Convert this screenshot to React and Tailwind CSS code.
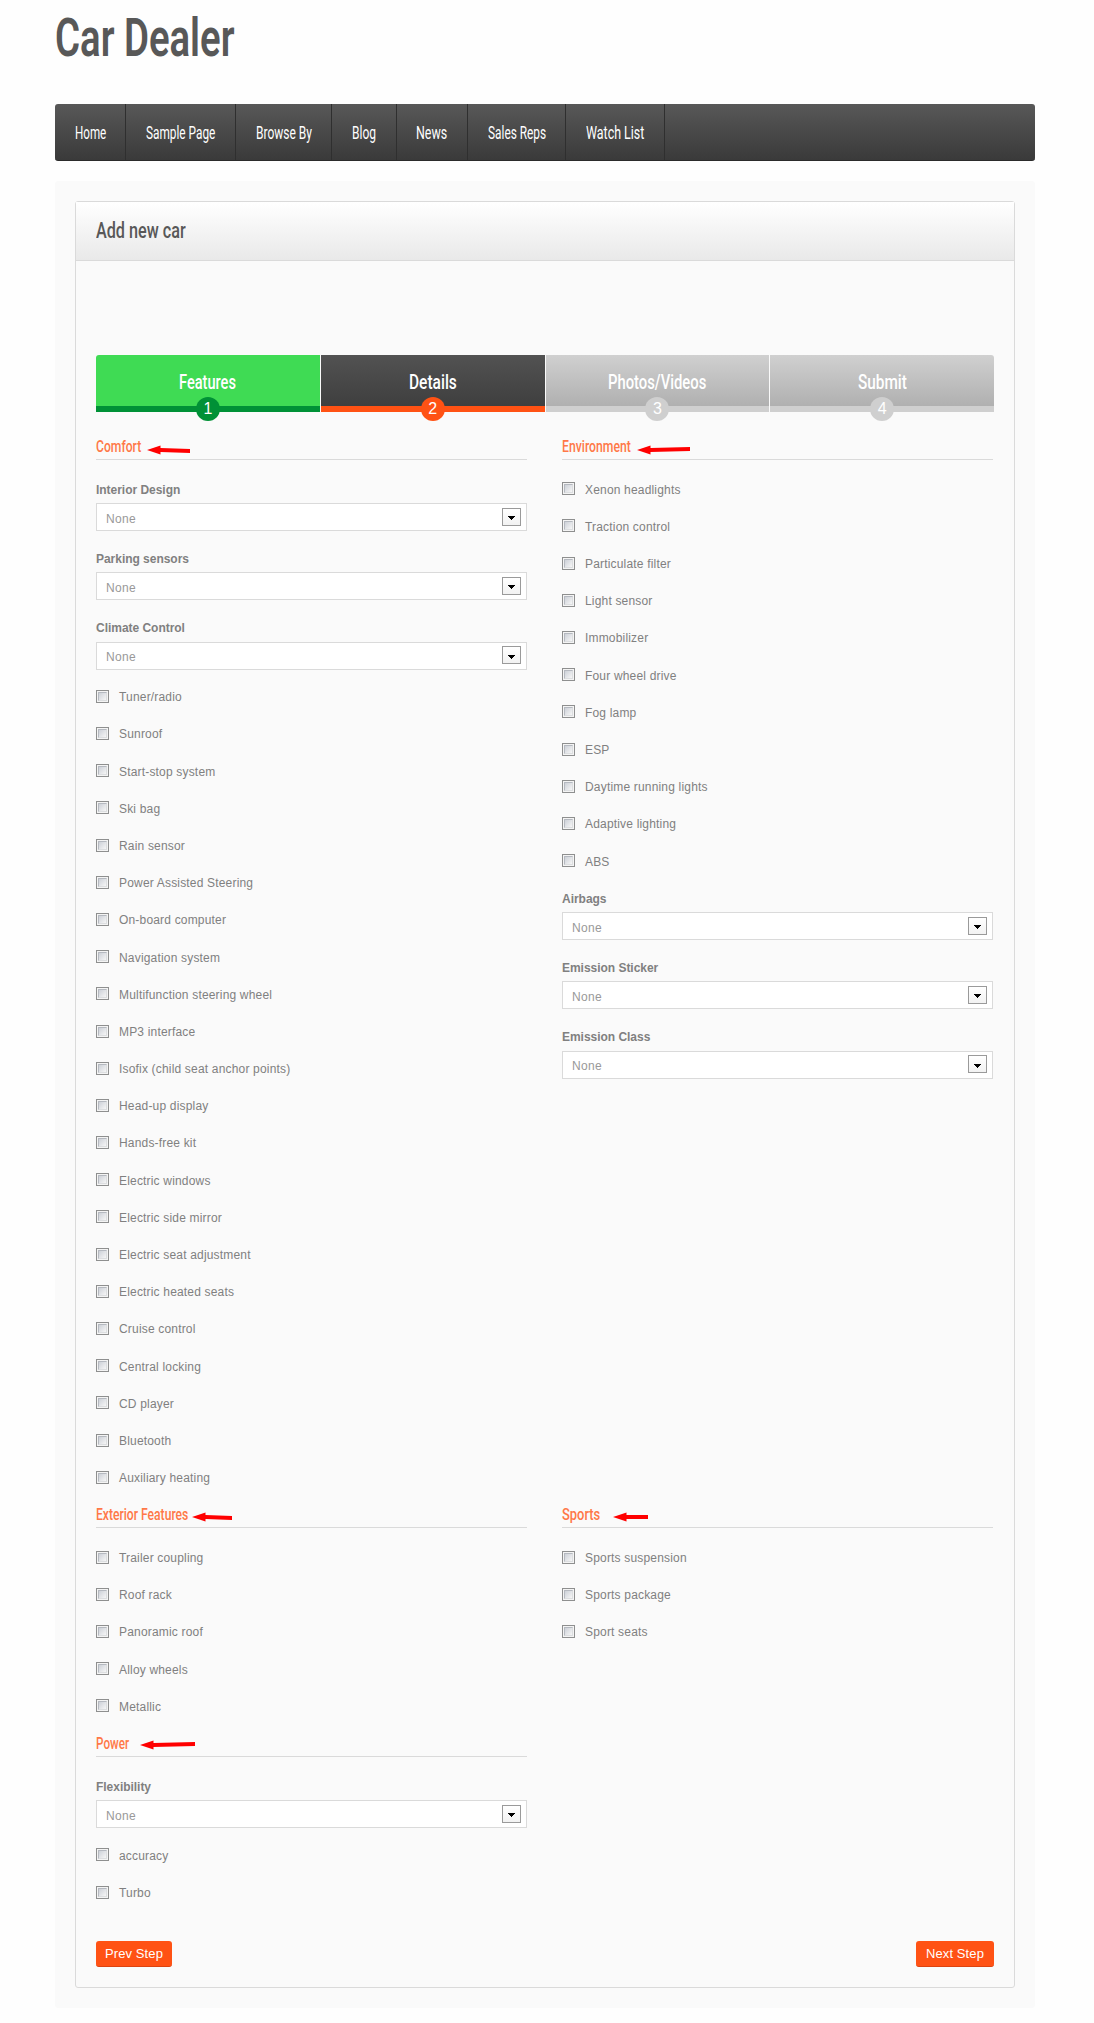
import { useLayoutEffect, useRef, useState } from "react";

// Condensed display text: squeezes its line of text to the given width.
function Condensed({ width, className = "", children }) {
  const ref = useRef(null);
  const [scale, setScale] = useState(1);
  useLayoutEffect(() => {
    setScale(width / ref.current.offsetWidth);
  }, [width]);
  return (
    <span className="block shrink-0 font-['Roboto',sans-serif]" style={{ width }}>
      <span
        ref={ref}
        className={`inline-block origin-left whitespace-nowrap ${className}`}
        style={{ transform: `scaleX(${scale})` }}
      >
        {children}
      </span>
    </span>
  );
}

const NAV = [
  ["Home", 31],
  ["Sample Page", 69],
  ["Browse By", 56],
  ["Blog", 24],
  ["News", 31],
  ["Sales Reps", 58],
  ["Watch List", 58],
];

const STEPS = [
  { label: "Features", width: 57, tile: "bg-[#3fdb54] border-[#009136] rounded-tl-[3px]", dot: "bg-[#009136]" },
  { label: "Details", width: 48, tile: "bg-linear-to-b from-[#525252] to-[#3f3f3f] border-[#ff5214]", dot: "bg-[#ff5214]" },
  { label: "Photos/Videos", width: 98, tile: "bg-linear-to-b from-[#d0d0d0] to-[#b0b0b0] border-[#cfcfcf]", dot: "bg-[#cfcfcf]" },
  { label: "Submit", width: 49, tile: "bg-linear-to-b from-[#d0d0d0] to-[#b0b0b0] border-[#cfcfcf] rounded-tr-[3px]", dot: "bg-[#cfcfcf]" },
];

const COMFORT = [
  "Tuner/radio", "Sunroof", "Start-stop system", "Ski bag", "Rain sensor",
  "Power Assisted Steering", "On-board computer", "Navigation system",
  "Multifunction steering wheel", "MP3 interface", "Isofix (child seat anchor points)",
  "Head-up display", "Hands-free kit", "Electric windows", "Electric side mirror",
  "Electric seat adjustment", "Electric heated seats", "Cruise control",
  "Central locking", "CD player", "Bluetooth", "Auxiliary heating",
];

const ENVIRONMENT = [
  "Xenon headlights", "Traction control", "Particulate filter", "Light sensor",
  "Immobilizer", "Four wheel drive", "Fog lamp", "ESP", "Daytime running lights",
  "Adaptive lighting", "ABS",
];

function Arrow({ length, tilt = 0 }) {
  return (
    <svg width={length} height="12" viewBox={`0 0 ${length} 12`} className="block shrink-0 fill-[#ff0000]">
      <path d={`M0 6 L13.5 1.5 V4 L${length} ${4 + tilt} V${8 + tilt} L13.5 8 V10.5 Z`} />
    </svg>
  );
}

function Section({ title, width, gap, arrow, tilt, children }) {
  return (
    <section>
      <div className="h-[42.7px]">
        <h3 className="flex h-8 items-center border-b border-[#dadada] pt-[6.6px]">
          <Condensed width={width} className="text-[17px] leading-6 font-medium text-[#ff7847]">{title}</Condensed>
          <div className={gap}>
            <Arrow length={arrow} tilt={tilt} />
          </div>
        </h3>
      </div>
      {children}
    </section>
  );
}

function Check({ label }) {
  return (
    <label className="flex h-[37.2px] items-center gap-[10px]">
      <span className="size-[13px] shrink-0 border border-[#8e8f8f] bg-[#f4f4f4] p-px">
        <span className="block size-[9px] border border-[#b5b9c0] border-r-[#dcdee0] border-b-[#dcdee0] bg-linear-to-br from-[#cdd1d8] to-[#f6f6f6]" />
      </span>
      <span className="pt-[1.8px] text-xs leading-4 tracking-[0.18px] text-[#808080]">{label}</span>
    </label>
  );
}

function Select({ label }) {
  return (
    <div className="h-[69.2px]">
      <div className="flex h-[33px] items-start pt-[11.6px] text-xs leading-4 font-bold tracking-[-0.03px] text-[#808080]">{label}</div>
      <div className="flex h-7 items-center justify-between border border-[#dadada] bg-white pr-[5px] pl-[9px]">
        <span className="pt-[3px] text-xs leading-4 tracking-[0.3px] text-[#999]">None</span>
        <span className="mb-px flex h-[18px] w-[19px] items-center justify-center border border-[#9a9a9a] bg-linear-to-b from-white to-[#f2f2f2]">
          <svg width="7" height="4" viewBox="0 0 7 4" className="mt-[3px] block" shapeRendering="crispEdges">
            <path d="M0 0H7V1H6V2H5V3H4V4H3V3H2V2H1V1H0Z" />
          </svg>
        </span>
      </div>
    </div>
  );
}

const BUTTON =
  "h-[26px] rounded-[3px] border-b border-[#dc4310] bg-[#ff5214] text-[13px] leading-[25px] tracking-[0.1px] text-white";

export default function App() {
  return (
    <div className="h-[2023px] w-[1094px] bg-[#fefefe] pl-[55px] font-['Liberation_Sans',Arial,sans-serif]">
      <div className="w-[980px]">
        <header className="h-[104px] pt-[5px]">
          <h1 className="-ml-[0.5px]">
            <Condensed width={179.5} className="text-[54px] leading-[65px] font-semibold text-[#585858]">Car Dealer</Condensed>
          </h1>
        </header>

        <nav className="flex h-[57px] overflow-hidden rounded-[3px] border-b border-[#2b2b2b] bg-linear-to-b from-[#585858] to-[#3a3a3a]">
          {NAV.map(([label, width]) => (
            <a key={label} className="flex items-center border-r border-[#2f2f2f] pt-[2px] pr-[19.5px] pl-[19.9px]">
              <Condensed width={width} className="text-[18px] leading-6 text-white">{label}</Condensed>
            </a>
          ))}
        </nav>

        <main className="mt-5 h-[1827px] rounded-[3px] bg-[#fafafa] p-5">
          <div className="h-[1787px] rounded-[3px] border border-[#dadada]">
            <h2 className="flex h-[59px] items-center border-b border-[#dadada] bg-linear-to-b from-white to-[#e9e9e9] pb-px pl-[19.5px]">
              <Condensed width={90} className="text-[22.5px] leading-7 font-medium text-[#585858]">Add new car</Condensed>
            </h2>

            <div className="px-5 pt-[94px]">
              <ol className="grid h-[57px] grid-cols-4 gap-px">
                {STEPS.map(({ label, width, tile, dot }, i) => (
                  <li key={label} className={`relative flex justify-center border-b-[6px] pt-[12.5px] ${tile}`}>
                    <Condensed width={width} className="text-[21px] leading-7 font-medium text-white">{label}</Condensed>
                    <span className={`absolute -bottom-[15px] left-1/2 flex size-6 -translate-x-1/2 items-center justify-center rounded-full text-base text-white ${dot}`}>
                      {i + 1}
                    </span>
                  </li>
                ))}
              </ol>

              <div className="grid grid-cols-[431px_431px] gap-x-[35px] pt-[15.5px]">
                <Section title="Comfort" width={45} gap="ml-[6px] pt-[7px]" arrow={43} tilt={1}>
                  <Select label="Interior Design" />
                  <Select label="Parking sensors" />
                  <Select label="Climate Control" />
                  {COMFORT.map((item) => <Check key={item} label={item} />)}
                </Section>
                <Section title="Environment" width={69} gap="ml-[6px] pt-[7px]" arrow={53} tilt={-1}>
                  {ENVIRONMENT.map((item) => <Check key={item} label={item} />)}
                  <Select label="Airbags" />
                  <Select label="Emission Sticker" />
                  <Select label="Emission Class" />
                </Section>
                <Section title="Exterior Features" width={92} gap="ml-[4px] pt-[4px]" arrow={40} tilt={1}>
                  {["Trailer coupling", "Roof rack", "Panoramic roof", "Alloy wheels", "Metallic"].map((item) => (
                    <Check key={item} label={item} />
                  ))}
                </Section>
                <Section title="Sports" width={38} gap="ml-[13px] pt-[4px]" arrow={35} tilt={0}>
                  {["Sports suspension", "Sports package", "Sport seats"].map((item) => (
                    <Check key={item} label={item} />
                  ))}
                </Section>
                <Section title="Power" width={33} gap="ml-[11px] pt-[3px]" arrow={55} tilt={-1}>
                  <Select label="Flexibility" />
                  <Check label="accuracy" />
                  <Check label="Turbo" />
                </Section>
              </div>

              <div className="flex justify-between pt-[30px]">
                <button className={`w-[76px] ${BUTTON}`}>Prev Step</button>
                <button className={`w-[78px] ${BUTTON}`}>Next Step</button>
              </div>
            </div>
          </div>
        </main>
      </div>
    </div>
  );
}
